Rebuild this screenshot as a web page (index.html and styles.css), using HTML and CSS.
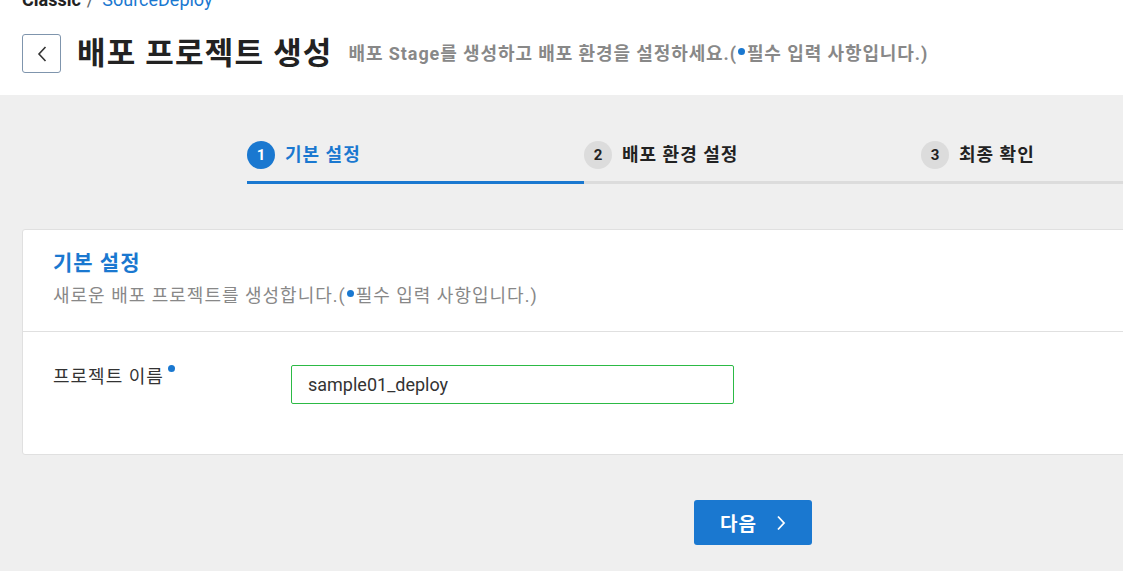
FILE: index.html
```html
<!DOCTYPE html>
<html lang="ko">
<head>
<meta charset="utf-8">
<link rel="stylesheet" href="styles.css">
</head>
<body>
<div class="page">
  <header class="header">
    <div class="breadcrumb"><span class="bc-root">Classic</span><span class="bc-sep">/</span><span class="bc-link">SourceDeploy</span></div>
    <div class="title-row">
      <button class="back-btn" aria-label="back">
        <svg width="12" height="18" viewBox="0 0 12 18"><path d="M9.5 2 L3 9 L9.5 16" fill="none" stroke="#333" stroke-width="1.6"/></svg>
      </button>
      <h1 class="title">배포 프로젝트 생성</h1>
      <p class="subtitle">배포 Stage를 생성하고 배포 환경을 설정하세요.(<span class="req-dot"></span>필수 입력 사항입니다.)</p>
    </div>
  </header>
  <main class="main">
    <div class="container">
      <ol class="stepper">
        <li class="step active"><span class="step-num">1</span><span class="step-label">기본 설정</span></li>
        <li class="step"><span class="step-num">2</span><span class="step-label">배포 환경 설정</span></li>
        <li class="step"><span class="step-num">3</span><span class="step-label">최종 확인</span></li>
      </ol>
      <section class="card">
        <div class="card-head">
          <h2 class="card-title">기본 설정</h2>
          <p class="card-desc">새로운 배포 프로젝트를 생성합니다.(<span class="req-dot"></span>필수 입력 사항입니다.)</p>
        </div>
        <div class="card-body">
          <label class="field-label">프로젝트 이름<span class="req-dot sup"></span></label>
          <div class="input">sample01_deploy</div>
        </div>
      </section>
      <div class="actions">
        <button class="next-btn"><span class="next-label">다음</span>
          <svg width="12" height="16" viewBox="0 0 12 16"><path d="M3 1.5 L9 8 L3 14.5" fill="none" stroke="#fff" stroke-width="1.8"/></svg>
        </button>
      </div>
    </div>
  </main>
</div>
</body>
</html>
```
FILE: styles.css
```css
* { box-sizing: border-box; }
html, body { margin: 0; padding: 0; }
body {
  width: 1123px;
  height: 571px;
  overflow: hidden;
  font-family: Roboto, "Noto Sans CJK KR", sans-serif;
  background: #efefef;
  color: #222;
}
.page { width: 1505px; }
.header {
  background: #fff;
  height: 95px;
  padding: 0 22px;
  overflow: hidden;
}
.breadcrumb {
  margin-top: -10px;
  height: 20px;
  line-height: 20px;
  font-size: 18px;
  display: flex;
}
.bc-root { font-weight: 700; color: #222; }
.bc-sep { color: #666; margin: 0 8px 0 6px; }
.bc-link { color: #1a78d0; }
.title-row {
  display: flex;
  align-items: center;
  margin-top: 24px;
}
.back-btn {
  width: 39px;
  height: 39px;
  border: 1px solid #7f95ad;
  border-radius: 3px;
  background: #fff;
  display: flex;
  align-items: center;
  justify-content: center;
  padding: 0;
  margin-right: 16px;
}
.title {
  margin: 0;
  font-size: 31px;
  font-weight: 700;
  letter-spacing: 1.2px;
  color: #222;
  line-height: 39px;
}
.subtitle {
  margin: 0 0 0 16px;
  font-size: 18px;
  font-weight: 700;
  letter-spacing: 0.9px;
  color: #888;
  line-height: 39px;
}
.req-dot {
  display: inline-block;
  width: 7px;
  height: 7px;
  border-radius: 50%;
  background: #1a78d0;
  vertical-align: 0.3em;
  margin: 0 2px 0 1px;
}
.req-dot.sup { vertical-align: 0.6em; margin-left: 4px; }
.main { padding: 46px 0 0 22px; }
.container { width: 1461px; }
.stepper {
  list-style: none;
  margin: 0 auto;
  padding: 0;
  width: 1011px;
  display: flex;
}
.step {
  flex: 1;
  display: flex;
  align-items: center;
  gap: 10px;
  padding-bottom: 12px;
  border-bottom: 3px solid #dcdcdc;
  font-size: 18px;
  font-weight: 700;
  letter-spacing: 1px;
  color: #222;
}
.step.active { border-bottom-color: #1a78d0; color: #1a78d0; }
.step-num {
  width: 28px;
  height: 28px;
  border-radius: 50%;
  background: #dcdcdc;
  color: #222;
  font-size: 15px;
  letter-spacing: 0;
  display: flex;
  align-items: center;
  justify-content: center;
}
.step.active .step-num { background: #1a78d0; color: #fff; }
.step-label { line-height: 28px; }
.card {
  margin-top: 45px;
  background: #fff;
  border: 1px solid #e0e0e0;
  border-radius: 3px;
}
.card-head {
  padding: 19px 30px 22px;
  border-bottom: 1px solid #e0e0e0;
}
.card-title {
  margin: 0;
  font-size: 21px;
  font-weight: 700;
  letter-spacing: 1px;
  color: #1a78d0;
  line-height: 28px;
}
.card-desc {
  margin: 6px 0 0;
  font-size: 18px;
  letter-spacing: 1px;
  color: #888;
  line-height: 26px;
}
.card-body {
  display: flex;
  align-items: flex-start;
  padding: 33px 30px 50px;
}
.field-label {
  width: 238px;
  font-size: 18px;
  letter-spacing: 1px;
  color: #333;
  line-height: 24px;
}
.input {
  width: 443px;
  height: 39px;
  border: 1px solid #2cba45;
  border-radius: 2px;
  padding: 0 16px;
  font-size: 18px;
  color: #333;
  line-height: 37px;
}
.actions {
  display: flex;
  justify-content: center;
  margin-top: 45px;
}
.next-btn {
  width: 118px;
  height: 45px;
  background: #1a78d0;
  border: none;
  border-radius: 3px;
  color: #fff;
  font-family: Roboto, "Noto Sans CJK KR", sans-serif;
  font-size: 19px;
  font-weight: 700;
  letter-spacing: 1px;
  display: flex;
  align-items: center;
  justify-content: center;
  gap: 18px;
  padding: 0 0 0 2px;
}
```
